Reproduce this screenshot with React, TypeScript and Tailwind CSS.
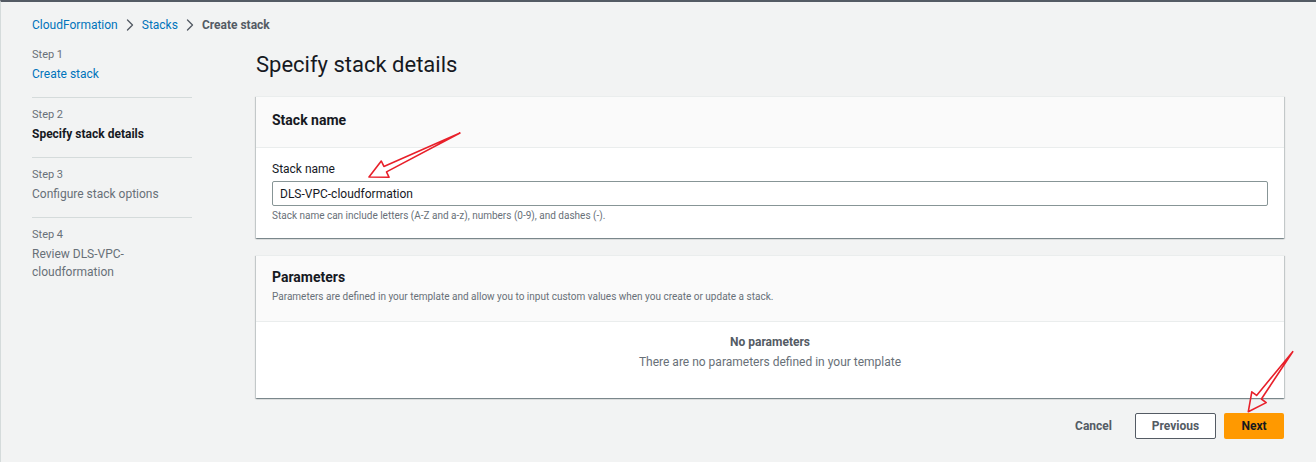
import { ChevronRight } from 'lucide-react';

const steps = [
  { label: 'Step 1', name: 'Create stack', state: 'link' },
  { label: 'Step 2', name: 'Specify stack details', state: 'active' },
  { label: 'Step 3', name: 'Configure stack options', state: 'todo' },
  { label: 'Step 4', name: 'Review DLS-VPC-cloudformation', state: 'todo' },
];

function Card({ children }: { children: React.ReactNode }) {
  return (
    <div className="bg-white border-t border-[#eaeded] shadow-[0_1px_1px_0_rgba(0,28,36,0.3),1px_1px_1px_0_rgba(0,28,36,0.15),-1px_1px_1px_0_rgba(0,28,36,0.15)]">
      {children}
    </div>
  );
}

export default function App() {
  return (
    <div
      className="relative h-[462px] w-full overflow-hidden bg-[#f2f3f3] border-t-2 border-t-[#545b64] border-l border-l-[#d5dbdb] text-[#16191f]"
      style={{ fontFamily: 'Roboto, "Liberation Sans", sans-serif' }}
    >
      {/* breadcrumbs */}
      <div className="h-[38px] pt-[8px] pl-[31px] flex items-center text-[12px] leading-[18px]">
        <span className="text-[#0073bb]">CloudFormation</span>
        <ChevronRight size={20} strokeWidth={1.6} className="mx-[2px] text-[#545b64]" />
        <span className="text-[#0073bb]">Stacks</span>
        <ChevronRight size={20} strokeWidth={1.6} className="mx-[2px] text-[#545b64]" />
        <span className="font-bold text-[#545b64]">Create stack</span>
      </div>

      <div className="flex pl-[31px] pr-[32px]">
        {/* wizard steps */}
        <nav className="w-[160px] shrink-0 pt-[7px]">
          {steps.map((s, i) => (
            <div key={s.label}>
              <div className="pb-[14px]">
                <div className="text-[11px] leading-[16px] text-[#687078]">{s.label}</div>
                <div
                  className={
                    'mt-[2px] text-[12px] leading-[18px] ' +
                    (s.state === 'link'
                      ? 'text-[#0073bb]'
                      : s.state === 'active'
                      ? 'font-bold text-[#16191f]'
                      : 'text-[#687078]')
                  }
                >
                  {s.name}
                </div>
              </div>
              {i < steps.length - 1 && <div className="h-px bg-[#d5dbdb] mb-[9px]" />}
            </div>
          ))}
        </nav>

        {/* main */}
        <main className="flex-1 ml-[64px]">
          <h1 className="mt-[9px] mb-[15px] text-[22px] leading-[32px] font-normal">Specify stack details</h1>

          <Card>
            <div className="h-[51px] bg-[#fafafa] border-b border-[#eaeded] px-[16px] pt-[13px]">
              <h2 className="text-[14px] leading-[20px] font-bold">Stack name</h2>
            </div>
            <div className="px-[16px] pt-[13px] pb-[15px]">
              <label className="block text-[12px] leading-[16px] text-[#16191f]">Stack name</label>
              <input
                readOnly
                value="DLS-VPC-cloudformation"
                className="mt-[4px] block w-full h-[25px] border border-[#879596] rounded-[2px] pl-[7px] text-[12px] text-[#16191f] outline-none bg-white"
              />
              <div className="mt-[3px] text-[10px] leading-[14px] text-[#687078]">
                Stack name can include letters (A-Z and a-z), numbers (0-9), and dashes (-).
              </div>
            </div>
          </Card>

          <div className="mt-[17px]">
            <Card>
              <div className="h-[66px] bg-[#fafafa] border-b border-[#eaeded] px-[16px] pt-[11px]">
                <h2 className="text-[14px] leading-[20px] font-bold">Parameters</h2>
                <p className="mt-[2px] text-[10px] leading-[16px] text-[#687078]">
                  Parameters are defined in your template and allow you to input custom values when you create or
                  update a stack.
                </p>
              </div>
              <div className="pt-[12px] pb-[27px] text-center">
                <div className="text-[12px] leading-[16px] font-bold text-[#545b64]">No parameters</div>
                <div className="mt-[3px] text-[12px] leading-[18px] text-[#687078]">
                  There are no parameters defined in your template
                </div>
              </div>
            </Card>
          </div>

          <div className="mt-[15px] flex justify-end items-center gap-[8px]">
            <button className="h-[26px] px-[15px] text-[12px] font-bold text-[#545b64]">Cancel</button>
            <button className="h-[26px] w-[81px] border border-[#545b64] rounded-[2px] bg-white text-[12px] font-bold text-[#545b64]">
              Previous
            </button>
            <button className="h-[26px] w-[60px] rounded-[2px] bg-[#ff9900] text-[12px] font-bold text-[#16191f]">
              Next
            </button>
          </div>
        </main>
      </div>

      {/* red annotation arrows */}
      <svg className="pointer-events-none absolute left-[-1px] top-[-2px]" width="1316" height="462">
        <path
          d="M460,133 L383.9,166.4 L381.3,161 L369,177 L389.1,177.3 L386.5,171.9 Z"
          fill="none"
          stroke="#e8202a"
          strokeWidth="1.6"
          strokeLinejoin="round"
        />
        <path
          d="M1292.7,351.7 L1256.6,395.4 L1251.8,391.8 L1248.3,411.7 L1266.2,402.6 L1261.4,399 Z"
          fill="none"
          stroke="#e8202a"
          strokeWidth="1.6"
          strokeLinejoin="round"
        />
      </svg>
    </div>
  );
}
